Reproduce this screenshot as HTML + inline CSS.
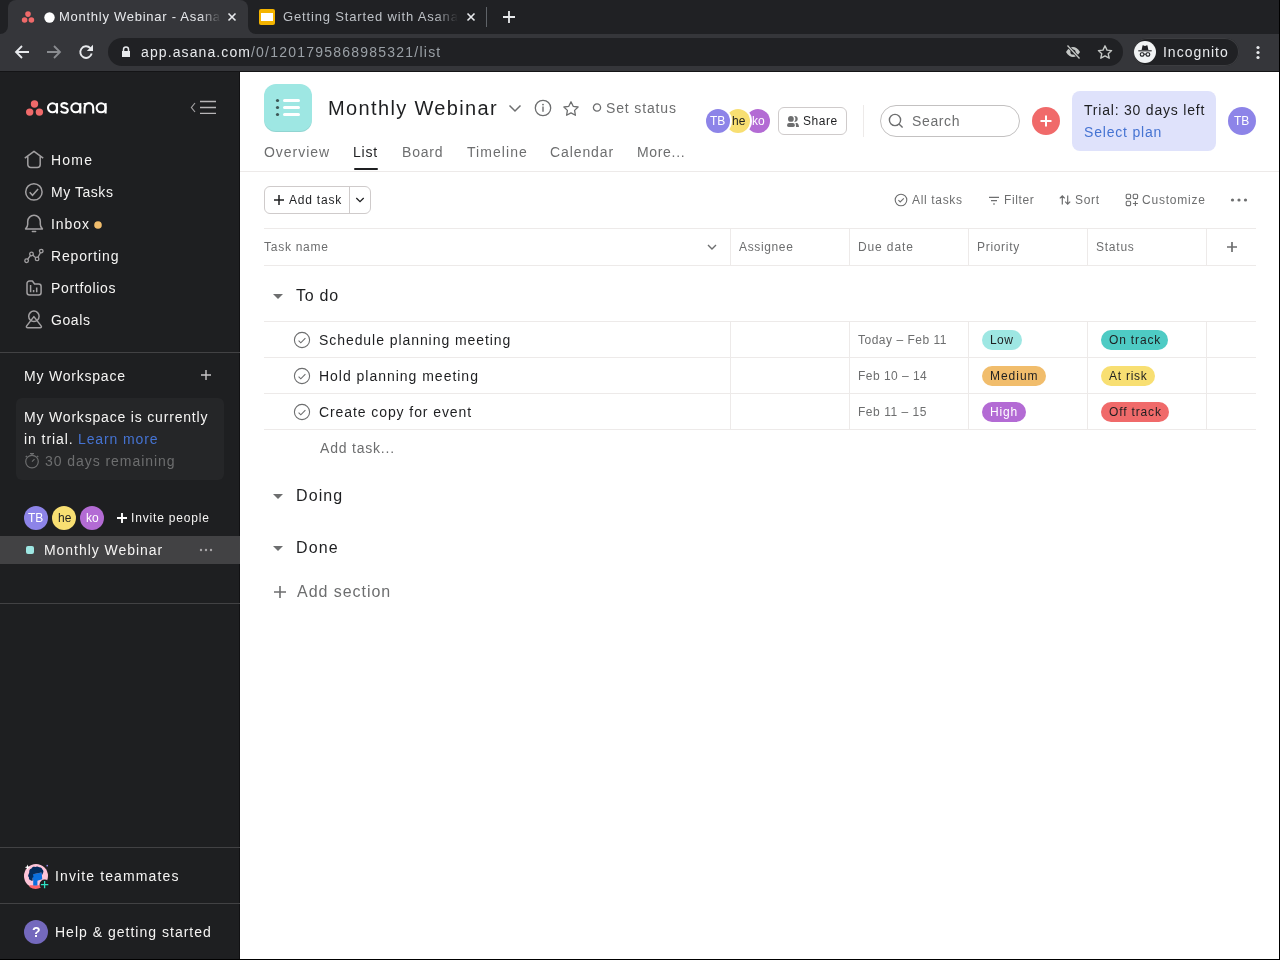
<!DOCTYPE html>
<html><head><meta charset="utf-8"><title>Monthly Webinar - Asana</title><style>*{margin:0;padding:0;box-sizing:content-box}
html,body{width:1280px;height:960px;overflow:hidden;background:#fff}
body{position:relative;font-family:"Liberation Sans", sans-serif}
.a{position:absolute;display:block}
.t{position:absolute;white-space:nowrap;will-change:transform}
.av{border-radius:50%}
</style></head><body>
<div class="a" style="left:0px;top:0px;width:1280px;height:34px;background:#202124;"></div>
<div class="a" style="left:0px;top:34px;width:1280px;height:37px;background:#35363a;"></div>
<div class="a" style="left:0px;top:71px;width:1280px;height:1px;background:#141416;"></div>
<div class="a" style="left:8px;top:0px;width:240px;height:40px;background:#35363a;border-radius:8px 8px 0 0"></div>
<div class="a" style="left:0px;top:26px;width:8px;height:8px;background:#35363a"></div>
<div class="a" style="left:0px;top:18px;width:8px;height:16px;background:#202124;border-bottom-right-radius:8px"></div>
<div class="a" style="left:248px;top:26px;width:8px;height:8px;background:#35363a"></div>
<div class="a" style="left:248px;top:18px;width:8px;height:16px;background:#202124;border-bottom-left-radius:8px"></div>
<svg class="a" style="left:20px;top:9px;" width="16" height="16" viewBox="0 0 16 16"><circle cx="8" cy="5.1" r="2.8" fill="#f06a6a"/><circle cx="4.6" cy="11" r="2.8" fill="#f06a6a"/><circle cx="11.4" cy="11" r="2.8" fill="#f06a6a"/></svg>
<svg class="a" style="left:44px;top:12px;" width="11" height="11" viewBox="0 0 11 11"><circle cx="5.5" cy="5.5" r="5.2" fill="#ffffff"/></svg>
<div class="t " style="left:58.71px;top:8.00px;font-size:13px;line-height:18px;color:#e8eaed;letter-spacing:0.732px;width:162px;overflow:hidden;-webkit-mask-image:linear-gradient(90deg,#000 140px,transparent 162px);">Monthly Webinar - Asana</div>
<svg class="a" style="left:226px;top:11px;" width="12" height="12" viewBox="0 0 12 12"><path d="M2.5 2.5L9.5 9.5M9.5 2.5L2.5 9.5" stroke="#e8eaed" stroke-width="1.6"/></svg>
<div class="a" style="left:259px;top:9px;width:16px;height:16px;background:#f4b400;border-radius:2px"></div>
<div class="a" style="left:261px;top:13px;width:12px;height:8px;background:#ffffff;"></div>
<div class="t " style="left:282.58px;top:8.00px;font-size:13px;line-height:18px;color:#bdc1c6;letter-spacing:0.840px;width:175px;overflow:hidden;-webkit-mask-image:linear-gradient(90deg,#000 152px,transparent 175px);">Getting Started with Asana</div>
<svg class="a" style="left:465px;top:11px;" width="12" height="12" viewBox="0 0 12 12"><path d="M2.5 2.5L9.5 9.5M9.5 2.5L2.5 9.5" stroke="#e8eaed" stroke-width="1.6"/></svg>
<div class="a" style="left:486px;top:7px;width:1px;height:20px;background:#5f6368;"></div>
<svg class="a" style="left:501px;top:9px;" width="16" height="16" viewBox="0 0 16 16"><path d="M8 2v12M2 8h12" stroke="#e8eaed" stroke-width="1.8"/></svg>
<svg class="a" style="left:14px;top:44px;" width="16" height="16" viewBox="0 0 16 16"><path d="M15 8H2.5M8 2L2 8l6 6" stroke="#e8eaed" stroke-width="1.8" fill="none"/></svg>
<svg class="a" style="left:46px;top:44px;" width="16" height="16" viewBox="0 0 16 16"><path d="M1 8h12.5M8 2l6 6-6 6" stroke="#8a8c90" stroke-width="1.8" fill="none"/></svg>
<svg class="a" style="left:78px;top:44px;" width="16" height="16" viewBox="0 0 16 16"><path d="M13.7 9.6A5.8 5.8 0 1 1 12.3 4.1" stroke="#e8eaed" stroke-width="1.9" fill="none"/><path d="M15 0.8V7H8.8z" fill="#e8eaed"/></svg>
<div class="a" style="left:108px;top:38px;width:1015px;height:28px;background:#202124;border-radius:14px"></div>
<svg class="a" style="left:120px;top:45px;" width="12" height="13" viewBox="0 0 12 13"><path d="M3.5 6V4.5a2.5 2.5 0 0 1 5 0V6" stroke="#e8eaed" stroke-width="1.5" fill="none"/><rect x="2" y="6" width="8" height="6" fill="#e8eaed"/></svg>
<div class="t " style="left:141.25px;top:42.00px;font-size:14px;line-height:20px;color:#e8eaed;letter-spacing:1.104px;">app.asana.com</div>
<div class="t " style="left:250.50px;top:42.00px;font-size:14px;line-height:20px;color:#9aa0a6;letter-spacing:1.222px;">/0/1201795868985321/list</div>
<svg class="a" style="left:1064px;top:44px;" width="18" height="16" viewBox="0 0 18 16"><path d="M2 8c2-3.5 4.5-5 7-5s5 1.5 7 5c-2 3.5-4.5 5-7 5s-5-1.5-7-5z" fill="#c4c7c5"/><circle cx="9" cy="8" r="2.6" fill="#202124"/><path d="M3.5 1.5l12 13" stroke="#202124" stroke-width="2.6"/><path d="M3.5 1.5l12 13" stroke="#c4c7c5" stroke-width="1.3"/></svg>
<svg class="a" style="left:1096px;top:44px;" width="18" height="16" viewBox="0 0 18 16"><path d="M9 1.8l2 4.3 4.6.5-3.4 3.1 1 4.5L9 11.9l-4.2 2.3 1-4.5L2.4 6.6 7 6.1z" stroke="#c4c7c5" stroke-width="1.4" fill="none" stroke-linejoin="round"/></svg>
<div class="a" style="left:1133px;top:38px;width:106px;height:28px;background:#202124;border-radius:14px;box-shadow:inset 0 0 0 1px #3c3d40"></div>
<svg class="a" style="left:1133px;top:40px;" width="24" height="24" viewBox="0 0 24 24"><circle cx="12" cy="12" r="11" fill="#f1f3f4"/><path d="M8.6 10l.9-4.2c.1-.5.5-.6 1-.4l1.5.5 1.5-.5c.5-.2.9-.1 1 .4l.9 4.2z" fill="#202124"/><path d="M5.3 10.8h13.4" stroke="#202124" stroke-width="1.1"/><rect x="7.3" y="12.8" width="3.6" height="3.3" rx="1.3" stroke="#202124" stroke-width="1.1" fill="none"/><rect x="13.1" y="12.8" width="3.6" height="3.3" rx="1.3" stroke="#202124" stroke-width="1.1" fill="none"/><path d="M10.9 14.2h2.2" stroke="#202124" stroke-width="1"/></svg>
<div class="t " style="left:1163.08px;top:42.00px;font-size:14px;line-height:20px;color:#e8eaed;letter-spacing:0.985px;">Incognito</div>
<svg class="a" style="left:1254px;top:44px;" width="8" height="16" viewBox="0 0 8 16"><circle cx="4" cy="3.5" r="1.6" fill="#e8eaed"/><circle cx="4" cy="8.5" r="1.6" fill="#e8eaed"/><circle cx="4" cy="13.5" r="1.6" fill="#e8eaed"/></svg>
<div class="a" style="left:0px;top:72px;width:240px;height:888px;background:#1e1f21;"></div>
<div class="a" style="left:239px;top:72px;width:1px;height:888px;background:#111113;"></div>
<svg class="a" style="left:24px;top:98px;" width="22" height="20" viewBox="0 0 22 20"><circle cx="10.5" cy="6" r="3.7" fill="#f06a6a"/><circle cx="5.7" cy="14.1" r="3.7" fill="#f06a6a"/><circle cx="15.4" cy="14.1" r="3.7" fill="#f06a6a"/></svg>
<svg class="a" style="left:47px;top:102px;" width="62" height="13" viewBox="0 0 62 13"><g fill="none" stroke="#ffffff" stroke-width="2.1"><circle cx="5.5" cy="5.8" r="4.5"/><path d="M10 1.1v10.4"/><path d="M20.6 2.7c-.7-1-1.8-1.6-3.3-1.6-1.8 0-3 .9-3 2.2 0 3 6.5 1.6 6.5 4.9 0 1.5-1.4 2.6-3.4 2.6-1.6 0-2.9-.7-3.6-1.8"/><circle cx="28.8" cy="5.8" r="4.5"/><path d="M33.3 1.1v10.4"/><path d="M37.6 11.5V6c0-2.9 1.8-4.9 4.3-4.9s4.3 2 4.3 4.9v5.5M37.6 1.1v1.5"/><circle cx="54.1" cy="5.8" r="4.5"/><path d="M58.6 1.1v10.4"/></g></svg>
<svg class="a" style="left:189px;top:99px;" width="30" height="17" viewBox="0 0 30 17"><path d="M6 4l-3.6 4.5L6 13" stroke="#a2a0a2" stroke-width="1.2" fill="none"/><path d="M11 2.5h16M11 8.5h16M11 14.4h16" stroke="#b7b5b7" stroke-width="1.3"/></svg>
<svg class="a" style="left:24px;top:150px;" width="20" height="20" viewBox="0 0 20 20"><path d="M0.8 8.2L10 1.3l9.2 6.9M3.8 6.2v8.3a3 3 0 0 0 3 3h6.4a3 3 0 0 0 3-3V6.2" stroke="#a2a0a2" stroke-width="1.5" fill="none" stroke-linejoin="round"/></svg>
<div class="t " style="left:51.23px;top:150.00px;font-size:14px;line-height:20px;color:#f5f4f3;letter-spacing:1.212px;">Home</div>
<svg class="a" style="left:24px;top:182px;" width="20" height="20" viewBox="0 0 20 20"><circle cx="9.9" cy="9.9" r="8.2" stroke="#a2a0a2" stroke-width="1.5" fill="none"/><path d="M5.7 10.3l2.8 3 5.6-6.2" stroke="#a2a0a2" stroke-width="1.5" fill="none"/></svg>
<div class="t " style="left:51.23px;top:182.00px;font-size:14px;line-height:20px;color:#f5f4f3;letter-spacing:0.547px;">My Tasks</div>
<svg class="a" style="left:24px;top:214px;" width="20" height="20" viewBox="0 0 20 20"><path d="M1.6 14.9c1.3-1.2 2.1-2.6 2.1-4.6V7.6a6.3 6.3 0 0 1 12.6 0v2.7c0 2 .8 3.4 2.1 4.6z" stroke="#a2a0a2" stroke-width="1.5" fill="none" stroke-linejoin="round"/><path d="M8.4 17.6h3.2" stroke="#a2a0a2" stroke-width="1.5" stroke-linecap="round"/></svg>
<div class="t " style="left:51.08px;top:214.00px;font-size:14px;line-height:20px;color:#f5f4f3;letter-spacing:0.918px;">Inbox</div>
<svg class="a" style="left:24px;top:246px;" width="20" height="20" viewBox="0 0 20 20"><path d="M2.6 14.75L7.5 8l5.6 4.9 4.15-7.8" stroke="#a2a0a2" stroke-width="1.3" fill="none"/><circle cx="2.6" cy="14.75" r="1.8" fill="#1e1f21" stroke="#a2a0a2" stroke-width="1.3"/><circle cx="7.5" cy="8" r="1.8" fill="#1e1f21" stroke="#a2a0a2" stroke-width="1.3"/><circle cx="13.1" cy="12.9" r="1.8" fill="#1e1f21" stroke="#a2a0a2" stroke-width="1.3"/><circle cx="17.25" cy="5.1" r="1.8" fill="#1e1f21" stroke="#a2a0a2" stroke-width="1.3"/></svg>
<div class="t " style="left:51.23px;top:246.00px;font-size:14px;line-height:20px;color:#f5f4f3;letter-spacing:0.846px;">Reporting</div>
<svg class="a" style="left:24px;top:278px;" width="20" height="20" viewBox="0 0 20 20"><path d="M3 5.5A2.5 2.5 0 0 1 5.5 3H8.4l2.2 3h4a2.5 2.5 0 0 1 2.5 2.5v6.1a2.5 2.5 0 0 1-2.5 2.5H5.5A2.5 2.5 0 0 1 3 14.6z" stroke="#a2a0a2" stroke-width="1.5" fill="none" stroke-linejoin="round"/><path d="M6.6 7v7.2M9.6 12v2.2M12.7 9.5v4.7" stroke="#a2a0a2" stroke-width="1.5"/></svg>
<div class="t " style="left:51.23px;top:278.00px;font-size:14px;line-height:20px;color:#f5f4f3;letter-spacing:0.681px;">Portfolios</div>
<svg class="a" style="left:24px;top:310px;" width="20" height="20" viewBox="0 0 20 20"><circle cx="9.9" cy="6.3" r="5.2" stroke="#a2a0a2" stroke-width="1.5" fill="none"/><path d="M9.9 6.6L2.7 15.9c-.8 1.1-.2 1.8 1 1.8h12.4c1.2 0 1.8-.7 1-1.8z" stroke="#a2a0a2" stroke-width="1.5" fill="none" stroke-linejoin="round"/></svg>
<div class="t " style="left:51.08px;top:310.00px;font-size:14px;line-height:20px;color:#f5f4f3;letter-spacing:0.587px;">Goals</div>
<svg class="a" style="left:94px;top:221px;" width="8" height="8" viewBox="0 0 8 8"><circle cx="4" cy="4" r="3.8" fill="#f1bd6c"/></svg>
<div class="a" style="left:0px;top:352px;width:240px;height:1px;background:#424244;"></div>
<div class="t " style="left:23.73px;top:366.00px;font-size:14px;line-height:20px;color:#f5f4f3;letter-spacing:0.788px;">My Workspace</div>
<svg class="a" style="left:200px;top:369px;" width="12" height="12" viewBox="0 0 12 12"><path d="M6 1v10M1 6h10" stroke="#c8c6c8" stroke-width="1.4"/></svg>
<div class="a" style="left:16px;top:398px;width:208px;height:82px;background:#252628;border-radius:6px"></div>
<div class="t " style="left:23.73px;top:407.00px;font-size:14px;line-height:20px;color:#f5f4f3;letter-spacing:0.816px;">My Workspace is currently</div>
<div class="t " style="left:23.88px;top:429.00px;font-size:14px;line-height:20px;color:#f5f4f3;letter-spacing:0.929px;">in trial.</div>
<div class="t " style="left:78.44px;top:429.00px;font-size:14px;line-height:20px;color:#4573d2;letter-spacing:0.878px;">Learn more</div>
<svg class="a" style="left:24px;top:452px;" width="16" height="17" viewBox="0 0 16 17"><circle cx="8" cy="9.6" r="6.3" stroke="#6d6e6f" stroke-width="1.2" fill="none"/><path d="M6 1.6h4M8 1.6v1.6M13 3.8l1.3 1.3M1.7 5.1L3 3.8M8 9.6l2.5-2.5" stroke="#6d6e6f" stroke-width="1.2"/></svg>
<div class="t " style="left:44.53px;top:451.00px;font-size:14px;line-height:20px;color:#6d6e6f;letter-spacing:0.947px;">30 days remaining</div>
<div class="a av" style="left:24.0px;top:506.0px;width:24px;height:24px;background:#8d84e8;"></div>
<div class="a av" style="left:52.0px;top:506.0px;width:24px;height:24px;background:#f8df72;"></div>
<div class="a av" style="left:80.0px;top:506.0px;width:24px;height:24px;background:#b36bd4;"></div>
<div class="t " style="left:28.02px;top:510.00px;font-size:12px;line-height:17px;color:#ffffff;">TB</div>
<div class="t " style="left:57.58px;top:510.00px;font-size:12px;line-height:17px;color:#1e1f21;">he</div>
<div class="t " style="left:85.94px;top:510.00px;font-size:12px;line-height:17px;color:#ffffff;">ko</div>
<svg class="a" style="left:116px;top:512px;" width="12" height="12" viewBox="0 0 12 12"><path d="M6 1v10M1 6h10" stroke="#ffffff" stroke-width="1.9"/></svg>
<div class="t " style="left:131.07px;top:510.00px;font-size:12px;line-height:17px;color:#f5f4f3;letter-spacing:0.828px;">Invite people</div>
<div class="a" style="left:0px;top:536px;width:240px;height:28px;background:#424244;"></div>
<div class="a" style="left:26px;top:546px;width:8px;height:8px;background:#9ee7e3;border-radius:2px"></div>
<div class="t " style="left:44.23px;top:540.00px;font-size:14px;line-height:20px;color:#f5f4f3;letter-spacing:0.952px;">Monthly Webinar</div>
<svg class="a" style="left:198px;top:547px;" width="16" height="6" viewBox="0 0 16 6"><circle cx="3" cy="3" r="1.2" fill="#a8a6a8"/><circle cx="8" cy="3" r="1.2" fill="#a8a6a8"/><circle cx="13" cy="3" r="1.2" fill="#a8a6a8"/></svg>
<div class="a" style="left:0px;top:603px;width:240px;height:1px;background:#424244;"></div>
<div class="a" style="left:0px;top:847px;width:240px;height:1px;background:#424244;"></div>
<div class="a" style="left:0px;top:903px;width:240px;height:1px;background:#424244;"></div>
<svg class="a" style="left:20px;top:860px;" width="32" height="32" viewBox="0 0 32 32"><circle cx="16" cy="16" r="12" fill="#fec4d8"/><path d="M9.5 25.3h11.5v2.3a12 12 0 0 1-11.5-.6z" fill="#fc636b"/><path d="M11 14.5L21.7 12.5 22.2 19.3 17.4 20.7V25.5H13.2V20.3z" fill="#0b6fe0"/><path d="M9.3 12.3c-.4-1.8.6-3.4 2.2-3.8.6-1.4 2.2-2 3.6-1.4 1.2-1 3-.9 4 .2 1.6-.3 3.1.8 3.3 2.3 1.2.8 1.3 2.4.6 3.5l-.9 1.8-.6-2.4-8.5 1.8.5 2.6-1 .9.3 2.6c-.7.5-1.9.4-2.5-.4-1.1-.4-1.6-1.5-1.3-2.6-1-.8-1.1-2.2-.4-3.1z" fill="#032b5d"/><circle cx="24.6" cy="24.6" r="5" fill="#1e1f21"/><path d="M24.6 20.9v7.4M20.9 24.6h7.4" stroke="#2de0c3" stroke-width="1.3"/><path d="M7.5 4.6l.7 2 2 .7-2 .7-.7 2-.7-2-2-.7 2-.7z" fill="#ffffff"/><rect x="26.5" y="4.9" width="1.5" height="1.5" fill="#8d84e8"/></svg>
<div class="t " style="left:55.08px;top:866.00px;font-size:14px;line-height:20px;color:#f5f4f3;letter-spacing:1.120px;">Invite teammates</div>
<svg class="a" style="left:24px;top:920px;" width="24" height="24" viewBox="0 0 24 24"><circle cx="12" cy="12" r="12" fill="#7469bd"/></svg>
<div class="t " style="left:32.13px;top:922.00px;font-size:14px;line-height:20px;color:#ffffff;font-weight:700;">?</div>
<div class="t " style="left:55.23px;top:922.00px;font-size:14px;line-height:20px;color:#f5f4f3;letter-spacing:1.009px;">Help &amp; getting started</div>
<div class="a" style="left:240px;top:72px;width:1039px;height:887px;background:#ffffff;"></div>
<div class="a" style="left:1279px;top:0px;width:1px;height:960px;background:#000000;"></div>
<div class="a" style="left:0px;top:959px;width:1280px;height:1px;background:#000000;"></div>
<div class="a" style="left:264px;top:84px;width:48px;height:48px;background:#9ee7e3;border-radius:12px;box-shadow:inset 0 -1px 0 rgba(0,0,0,0.08)"></div>
<svg class="a" style="left:264px;top:84px;" width="48" height="48" viewBox="0 0 48 48"><circle cx="13.5" cy="16.5" r="1.6" fill="#3d5756"/><circle cx="13.5" cy="23.5" r="1.6" fill="#3d5756"/><circle cx="13.5" cy="30.5" r="1.6" fill="#3d5756"/><path d="M20.5 16.5h14M20.5 23.5h14M20.5 30.5h14" stroke="#ffffff" stroke-width="3" stroke-linecap="round"/></svg>
<div class="t " style="left:328.32px;top:94.00px;font-size:20px;line-height:28px;color:#1e1f21;letter-spacing:1.361px;">Monthly Webinar</div>
<svg class="a" style="left:507px;top:102px;" width="16" height="12" viewBox="0 0 16 12"><path d="M2.5 3.5l5.5 5.5 5.5-5.5" stroke="#6d6e6f" stroke-width="1.5" fill="none"/></svg>
<svg class="a" style="left:534px;top:99px;" width="18" height="18" viewBox="0 0 18 18"><circle cx="9" cy="9" r="7.7" stroke="#6d6e6f" stroke-width="1.3" fill="none"/><circle cx="9" cy="5.6" r="0.9" fill="#6d6e6f"/><path d="M9 7.6v5.2" stroke="#6d6e6f" stroke-width="1.4"/></svg>
<svg class="a" style="left:562px;top:100px;" width="18" height="17" viewBox="0 0 18 17"><path d="M9 1.8l2.2 4.5 4.9.7-3.5 3.4.8 4.9L9 12.9l-4.4 2.4.8-4.9-3.5-3.4 4.9-.7z" stroke="#6d6e6f" stroke-width="1.3" fill="none" stroke-linejoin="round"/></svg>
<svg class="a" style="left:591px;top:101px;" width="12" height="12" viewBox="0 0 12 12"><circle cx="6" cy="6.5" r="3.6" stroke="#6d6e6f" stroke-width="1.3" fill="none"/></svg>
<div class="t " style="left:606.29px;top:98.00px;font-size:14px;line-height:20px;color:#6d6e6f;letter-spacing:0.860px;">Set status</div>
<div class="a av" style="left:746.0px;top:109.0px;width:24px;height:24px;background:#b36bd4;"></div>
<div class="t " style="left:751.94px;top:113.00px;font-size:12px;line-height:17px;color:#ffffff;">ko</div>
<div class="a av" style="left:726.0px;top:109.0px;width:24px;height:24px;background:#f8df72;box-shadow:0 0 0 2px #fff"></div>
<div class="t " style="left:731.58px;top:113.00px;font-size:12px;line-height:17px;color:#1e1f21;">he</div>
<div class="a av" style="left:706.0px;top:109.0px;width:24px;height:24px;background:#8d84e8;box-shadow:0 0 0 2px #fff"></div>
<div class="t " style="left:710.02px;top:113.00px;font-size:12px;line-height:17px;color:#ffffff;">TB</div>
<div class="a" style="left:778px;top:107px;width:67px;height:26px;border:1px solid #cfcbcb;border-radius:6px"></div>
<svg class="a" style="left:784px;top:112px;" width="18" height="18" viewBox="0 0 18 18"><circle cx="6.9" cy="6.9" r="2.9" fill="#6d6e6f"/><path d="M10.1 4.1A2.9 2.9 0 1 1 10.1 9.7 3.6 3.6 0 0 0 10.1 4.1z" fill="#6d6e6f"/><rect x="3.1" y="11" width="7.7" height="4.1" rx="1.9" fill="#6d6e6f"/><path d="M11.4 11h1.2c1.4 0 2.4 1.8 2.4 4.1h-3c0-1.8-.1-3-.6-4.1z" fill="#6d6e6f"/></svg>
<div class="t " style="left:803.25px;top:113.00px;font-size:12px;line-height:17px;color:#1e1f21;letter-spacing:0.564px;">Share</div>
<div class="a" style="left:863px;top:105px;width:1px;height:32px;background:#edeae9;"></div>
<div class="a" style="left:880px;top:105px;width:138px;height:30px;border:1px solid #c3c1c1;border-radius:16px"></div>
<svg class="a" style="left:887px;top:113px;" width="18" height="16" viewBox="0 0 18 16"><circle cx="8" cy="7" r="5.6" stroke="#6d6e6f" stroke-width="1.4" fill="none"/><path d="M12 11l3.6 3.6" stroke="#6d6e6f" stroke-width="1.4"/></svg>
<div class="t " style="left:912.29px;top:111.00px;font-size:14px;line-height:20px;color:#6d6e6f;letter-spacing:0.637px;">Search</div>
<div class="a" style="left:1032px;top:107px;width:28px;height:28px;background:#f06a6a;border-radius:50%"></div>
<svg class="a" style="left:1039px;top:114px;" width="14" height="14" viewBox="0 0 14 14"><path d="M7 1.5v11M1.5 7h11" stroke="#ffffff" stroke-width="2"/></svg>
<div class="a" style="left:1072px;top:91px;width:144px;height:60px;background:#dfe2fb;border-radius:8px"></div>
<div class="t " style="left:1083.64px;top:100.00px;font-size:14px;line-height:20px;color:#1e1f21;letter-spacing:0.792px;">Trial: 30 days left</div>
<div class="t " style="left:1084.29px;top:122.00px;font-size:14px;line-height:20px;color:#4573d2;letter-spacing:0.803px;">Select plan</div>
<div class="a av" style="left:1228.0px;top:107.0px;width:28px;height:28px;background:#8d84e8;"></div>
<div class="t " style="left:1234.02px;top:113.00px;font-size:12px;line-height:17px;color:#ffffff;">TB</div>
<div class="t " style="left:263.72px;top:142.00px;font-size:14px;line-height:20px;color:#6d6e6f;letter-spacing:0.974px;">Overview</div>
<div class="t " style="left:353.03px;top:142.00px;font-size:14px;line-height:20px;color:#1e1f21;letter-spacing:0.743px;">List</div>
<div class="t " style="left:401.83px;top:142.00px;font-size:14px;line-height:20px;color:#6d6e6f;letter-spacing:0.801px;">Board</div>
<div class="t " style="left:467.24px;top:142.00px;font-size:14px;line-height:20px;color:#6d6e6f;letter-spacing:1.053px;">Timeline</div>
<div class="t " style="left:550.48px;top:142.00px;font-size:14px;line-height:20px;color:#6d6e6f;letter-spacing:0.897px;">Calendar</div>
<div class="t " style="left:637.33px;top:142.00px;font-size:14px;line-height:20px;color:#6d6e6f;letter-spacing:0.671px;">More...</div>
<div class="a" style="left:354px;top:168px;width:24px;height:2px;background:#1e1f21;border-radius:1px"></div>
<div class="a" style="left:240px;top:171px;width:1039px;height:1px;background:#edeae9;"></div>
<div class="a" style="left:264px;top:186px;width:105px;height:26px;border:1px solid #cfcbcb;border-radius:6px"></div>
<div class="a" style="left:349px;top:187px;width:1px;height:26px;background:#cfcbcb;"></div>
<svg class="a" style="left:273px;top:194px;" width="12" height="12" viewBox="0 0 12 12"><path d="M6 1v10M1 6h10" stroke="#1e1f21" stroke-width="1.5"/></svg>
<div class="t " style="left:288.57px;top:192.00px;font-size:12px;line-height:17px;color:#1e1f21;letter-spacing:0.784px;">Add task</div>
<svg class="a" style="left:354px;top:195px;" width="12" height="10" viewBox="0 0 12 10"><path d="M2.3 3l3.7 3.7L9.7 3" stroke="#1e1f21" stroke-width="1.3" fill="none"/></svg>
<svg class="a" style="left:894px;top:193px;" width="14" height="14" viewBox="0 0 14 14"><circle cx="7" cy="7" r="5.8" stroke="#6d6e6f" stroke-width="1.1" fill="none"/><path d="M4.4 7.2l1.8 1.8 3.6-3.6" stroke="#6d6e6f" stroke-width="1.1" fill="none"/></svg>
<div class="t " style="left:911.57px;top:192.00px;font-size:12px;line-height:17px;color:#6d6e6f;letter-spacing:0.662px;">All tasks</div>
<svg class="a" style="left:988px;top:195px;" width="12" height="12" viewBox="0 0 12 12"><path d="M1 2.3h10M3 5.6h6M5 9h2" stroke="#6d6e6f" stroke-width="1.2"/></svg>
<div class="t " style="left:1003.69px;top:192.00px;font-size:12px;line-height:17px;color:#6d6e6f;letter-spacing:0.611px;">Filter</div>
<svg class="a" style="left:1059px;top:193px;" width="12" height="14" viewBox="0 0 12 14"><path d="M3.3 11.5V3M0.8 5.3l2.5-2.5 2.5 2.5M8.7 2.5V11M6.2 8.7l2.5 2.5 2.5-2.5" stroke="#6d6e6f" stroke-width="1.2" fill="none"/></svg>
<div class="t " style="left:1075.25px;top:192.00px;font-size:12px;line-height:17px;color:#6d6e6f;letter-spacing:0.716px;">Sort</div>
<svg class="a" style="left:1125px;top:193px;" width="14" height="14" viewBox="0 0 14 14"><rect x="1.2" y="1.2" width="4.4" height="4.4" rx="1" stroke="#6d6e6f" stroke-width="1.1" fill="none"/><rect x="8.2" y="1.2" width="4.4" height="4.4" rx="1" stroke="#6d6e6f" stroke-width="1.1" fill="none"/><rect x="1.2" y="8.2" width="4.4" height="4.4" rx="1" stroke="#6d6e6f" stroke-width="1.1" fill="none"/><path d="M10.4 8v5M7.9 10.5h5" stroke="#6d6e6f" stroke-width="1.1"/></svg>
<div class="t " style="left:1141.56px;top:192.00px;font-size:12px;line-height:17px;color:#6d6e6f;letter-spacing:0.768px;">Customize</div>
<svg class="a" style="left:1229px;top:197px;" width="20" height="6" viewBox="0 0 20 6"><circle cx="3.5" cy="3" r="1.6" fill="#6d6e6f"/><circle cx="10" cy="3" r="1.6" fill="#6d6e6f"/><circle cx="16.5" cy="3" r="1.6" fill="#6d6e6f"/></svg>
<div class="a" style="left:264px;top:228px;width:992px;height:1px;background:#edeae9;"></div>
<div class="a" style="left:264px;top:265px;width:992px;height:1px;background:#edeae9;"></div>
<div class="a" style="left:730px;top:229px;width:1px;height:36px;background:#edeae9;"></div>
<div class="a" style="left:849px;top:229px;width:1px;height:36px;background:#edeae9;"></div>
<div class="a" style="left:968px;top:229px;width:1px;height:36px;background:#edeae9;"></div>
<div class="a" style="left:1087px;top:229px;width:1px;height:36px;background:#edeae9;"></div>
<div class="a" style="left:1206px;top:229px;width:1px;height:36px;background:#edeae9;"></div>
<div class="t " style="left:263.70px;top:239.00px;font-size:12px;line-height:17px;color:#6d6e6f;letter-spacing:0.740px;">Task name</div>
<svg class="a" style="left:706px;top:242px;" width="12" height="10" viewBox="0 0 12 10"><path d="M2 3l4 4 4-4" stroke="#6d6e6f" stroke-width="1.4" fill="none"/></svg>
<div class="t " style="left:739.07px;top:239.00px;font-size:12px;line-height:17px;color:#6d6e6f;letter-spacing:0.642px;">Assignee</div>
<div class="t " style="left:858.19px;top:239.00px;font-size:12px;line-height:17px;color:#6d6e6f;letter-spacing:0.872px;">Due date</div>
<div class="t " style="left:977.19px;top:239.00px;font-size:12px;line-height:17px;color:#6d6e6f;letter-spacing:0.693px;">Priority</div>
<div class="t " style="left:1096.25px;top:239.00px;font-size:12px;line-height:17px;color:#6d6e6f;letter-spacing:0.764px;">Status</div>
<svg class="a" style="left:1226px;top:241px;" width="12" height="12" viewBox="0 0 12 12"><path d="M6 1v10M1 6h10" stroke="#6d6e6f" stroke-width="1.7"/></svg>
<svg class="a" style="left:273px;top:294px;" width="10" height="6" viewBox="0 0 10 6"><path d="M0 0h10L5 5z" fill="#6d6e6f"/></svg>
<div class="t " style="left:295.59px;top:285.00px;font-size:16px;line-height:22px;color:#1e1f21;letter-spacing:0.734px;">To do</div>
<div class="a" style="left:264px;top:321px;width:992px;height:1px;background:#edeae9;"></div>
<div class="a" style="left:264px;top:357px;width:992px;height:1px;background:#edeae9;"></div>
<div class="a" style="left:264px;top:393px;width:992px;height:1px;background:#edeae9;"></div>
<div class="a" style="left:264px;top:429px;width:992px;height:1px;background:#edeae9;"></div>
<div class="a" style="left:730px;top:322px;width:1px;height:107px;background:#edeae9;"></div>
<div class="a" style="left:849px;top:322px;width:1px;height:107px;background:#edeae9;"></div>
<div class="a" style="left:968px;top:322px;width:1px;height:107px;background:#edeae9;"></div>
<div class="a" style="left:1087px;top:322px;width:1px;height:107px;background:#edeae9;"></div>
<div class="a" style="left:1206px;top:322px;width:1px;height:107px;background:#edeae9;"></div>
<svg class="a" style="left:293px;top:331px;" width="18" height="18" viewBox="0 0 18 18"><circle cx="9" cy="9" r="7.6" stroke="#6d6e6f" stroke-width="1.1" fill="none"/><path d="M5.6 9.6l2.2 2.2 4.6-4.6" stroke="#6d6e6f" stroke-width="1.1" fill="none"/></svg>
<div class="t " style="left:319.29px;top:330.00px;font-size:14px;line-height:20px;color:#1e1f21;letter-spacing:0.935px;">Schedule planning meeting</div>
<div class="t " style="left:857.70px;top:332.00px;font-size:12px;line-height:17px;color:#6d6e6f;letter-spacing:0.509px;">Today – Feb 11</div>
<div class="a" style="left:982px;top:330px;width:39.64px;height:20px;background:#9ee7e3;border-radius:10px"></div>
<div class="t " style="left:990.19px;top:332.00px;font-size:12px;line-height:17px;color:#1e1f21;letter-spacing:0.449px;">Low</div>
<div class="a" style="left:1101px;top:330px;width:67.41px;height:20px;background:#4ecbc4;border-radius:10px"></div>
<div class="t " style="left:1109.11px;top:332.00px;font-size:12px;line-height:17px;color:#1e1f21;letter-spacing:0.841px;">On track</div>
<svg class="a" style="left:293px;top:367px;" width="18" height="18" viewBox="0 0 18 18"><circle cx="9" cy="9" r="7.6" stroke="#6d6e6f" stroke-width="1.1" fill="none"/><path d="M5.6 9.6l2.2 2.2 4.6-4.6" stroke="#6d6e6f" stroke-width="1.1" fill="none"/></svg>
<div class="t " style="left:319.23px;top:366.00px;font-size:14px;line-height:20px;color:#1e1f21;letter-spacing:0.980px;">Hold planning meeting</div>
<div class="t " style="left:858.19px;top:368.00px;font-size:12px;line-height:17px;color:#6d6e6f;letter-spacing:0.466px;">Feb 10 – 14</div>
<div class="a" style="left:982px;top:366px;width:63.98px;height:20px;background:#f1bd6c;border-radius:10px"></div>
<div class="t " style="left:990.19px;top:368.00px;font-size:12px;line-height:17px;color:#1e1f21;letter-spacing:0.975px;">Medium</div>
<div class="a" style="left:1101px;top:366px;width:54.00px;height:20px;background:#f8df72;border-radius:10px"></div>
<div class="t " style="left:1109.07px;top:368.00px;font-size:12px;line-height:17px;color:#1e1f21;letter-spacing:0.756px;">At risk</div>
<svg class="a" style="left:293px;top:403px;" width="18" height="18" viewBox="0 0 18 18"><circle cx="9" cy="9" r="7.6" stroke="#6d6e6f" stroke-width="1.1" fill="none"/><path d="M5.6 9.6l2.2 2.2 4.6-4.6" stroke="#6d6e6f" stroke-width="1.1" fill="none"/></svg>
<div class="t " style="left:319.08px;top:402.00px;font-size:14px;line-height:20px;color:#1e1f21;letter-spacing:0.914px;">Create copy for event</div>
<div class="t " style="left:858.19px;top:404.00px;font-size:12px;line-height:17px;color:#6d6e6f;letter-spacing:0.532px;">Feb 11 – 15</div>
<div class="a" style="left:982px;top:402px;width:43.59px;height:20px;background:#b36bd4;border-radius:10px"></div>
<div class="t " style="left:990.19px;top:404.00px;font-size:12px;line-height:17px;color:#ffffff;letter-spacing:0.824px;">High</div>
<div class="a" style="left:1101px;top:402px;width:68.08px;height:20px;background:#f06a6a;border-radius:10px"></div>
<div class="t " style="left:1109.11px;top:404.00px;font-size:12px;line-height:17px;color:#1e1f21;letter-spacing:0.849px;">Off track</div>
<div class="t " style="left:320.08px;top:438.00px;font-size:14px;line-height:20px;color:#6d6e6f;letter-spacing:0.790px;">Add task...</div>
<svg class="a" style="left:273px;top:494px;" width="10" height="6" viewBox="0 0 10 6"><path d="M0 0h10L5 5z" fill="#6d6e6f"/></svg>
<div class="t " style="left:296.26px;top:485.00px;font-size:16px;line-height:22px;color:#1e1f21;letter-spacing:1.092px;">Doing</div>
<svg class="a" style="left:273px;top:546px;" width="10" height="6" viewBox="0 0 10 6"><path d="M0 0h10L5 5z" fill="#6d6e6f"/></svg>
<div class="t " style="left:296.26px;top:537.00px;font-size:16px;line-height:22px;color:#1e1f21;letter-spacing:1.148px;">Done</div>
<svg class="a" style="left:273px;top:585px;" width="14" height="14" viewBox="0 0 14 14"><path d="M7 1v12M1 7h12" stroke="#6d6e6f" stroke-width="1.6"/></svg>
<div class="t " style="left:296.59px;top:581.00px;font-size:16px;line-height:22px;color:#6d6e6f;letter-spacing:0.966px;">Add section</div>
</body></html>
